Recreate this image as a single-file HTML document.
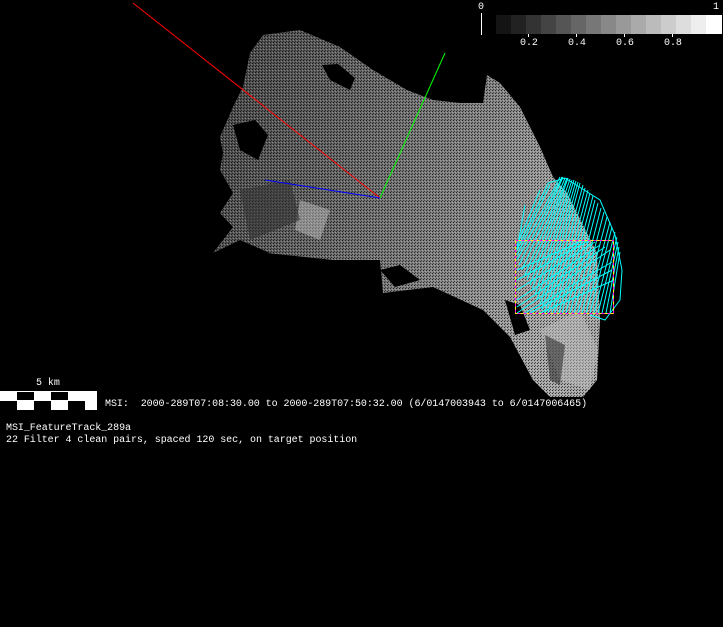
<!DOCTYPE html>
<html><head><style>
html,body{margin:0;padding:0;background:#000;width:723px;height:627px;overflow:hidden}
.t{position:absolute;color:#fff;font-family:"Liberation Mono",monospace;font-size:10px;letter-spacing:-0.05px;white-space:pre;line-height:12px}
</style></head><body>
<svg width="723" height="627" style="position:absolute;left:0;top:0">
<defs>
<linearGradient id="g" x1="0" y1="0" x2="1" y2="0.3">
<stop offset="0" stop-color="#444"/><stop offset="0.4" stop-color="#666"/><stop offset="0.75" stop-color="#888"/><stop offset="1" stop-color="#a8a8a8"/>
</linearGradient>
<pattern id="p" width="3" height="3" patternUnits="userSpaceOnUse"><rect x="0" y="0" width="1" height="1" fill="#000" opacity=".7"/><rect x="1" y="2" width="1" height="1" fill="#000" opacity=".5"/><rect x="2" y="1" width="1" height="1" fill="#ddd" opacity=".35"/></pattern>
</defs>
<g id="sh">
<polygon fill="url(#g)" points="263,35 300,30 340,47 373,70 407,90 433,100 460,103 483,103 487,75 500,83 520,107 540,147 553,177 567,193 597,253 600,320 597,380 583,397 550,397 533,380 510,337 483,310 433,287 383,293 380,260 333,260 267,253 213,253 233,227 220,213 233,193 220,170 223,153 220,137 233,107 243,87 250,53"/>
<polygon fill="url(#p)" points="263,35 300,30 340,47 373,70 407,90 433,100 460,103 483,103 487,75 500,83 520,107 540,147 553,177 567,193 597,253 600,320 597,380 583,397 550,397 533,380 510,337 483,310 433,287 383,293 380,260 333,260 267,253 213,253 233,227 220,213 233,193 220,170 223,153 220,137 233,107 243,87 250,53"/>
</g>
<g fill="#000">
<polygon points="233,125 255,120 268,135 258,160 240,150"/>
<polygon points="322,65 338,64 355,78 350,90 330,80"/>
<polygon points="380,270 400,265 420,280 395,287"/>
<polygon points="213,253 240,240 270,253"/>
<polygon points="505,300 520,305 530,330 515,335"/>
</g>
<g fill="#bbb" opacity=".5">
<polygon points="540,330 580,310 598,350 590,390 560,380"/>
<polygon points="300,200 330,210 320,240 295,230"/>
</g>
<g fill="#333" opacity=".6">
<polygon points="240,190 290,180 300,220 250,240"/>
<polygon points="545,335 565,345 560,385 550,380"/>
</g>
<g stroke="#0ff" stroke-width="1" fill="none">
<path d="M517,260 L560,177 M519,265 L562,177 M522,270 L563,177 M525,275 L565,178 M527,280 L567,178 M530,285 L568,178 M532,290 L570,179 M535,295 L572,180 M537,300 L574,180 M540,305 L576,181 M542,310 L578,182 M545,313 L580,183 M548,313 L583,185 M552,313 L585,188 M555,313 L588,190 M559,313 L590,193 M562,313 L593,196 M566,313 L595,200 M570,313 L598,203 M574,313 L601,208 M578,313 L604,212 M582,313 L607,217 M586,313 L610,222 M590,313 L612,227 M594,313 L615,232 M598,313 L617,237 M602,313 L618,242 M606,313 L619,247 M610,313 L620,252 M517,250 L525,205 M517,245 L540,190 M517,255 L550,185"/>
<path d="M517,250 L548,183 L565,178 L600,200 L615,235 L622,270 L620,300 L605,320 L590,315"/>
<path d="M517,270 L585,240 M517,280 L590,240 M517,290 L595,242 M517,300 L600,245 M517,307 L605,247 M517,313 L610,250 M525,313 L612,262 M530,313 L612,270 M540,313 L614,280"/>
</g>
<rect x="515.5" y="240.5" width="98" height="73" fill="none" stroke="#f0f" stroke-dasharray="3,3"/>
<rect x="515.5" y="240.5" width="98" height="73" fill="none" stroke="#ff0" stroke-dasharray="3,3" stroke-dashoffset="3"/>
<line x1="133" y1="3" x2="380" y2="198" stroke="#f00"/>
<line x1="380" y1="198" x2="445" y2="53" stroke="#0f0"/>
<line x1="265" y1="180" x2="380" y2="198" stroke="#00f"/>
<g>
<rect x="496" y="15" width="15" height="19" fill="#141414"/><rect x="511" y="15" width="15" height="19" fill="#222"/><rect x="526" y="15" width="15" height="19" fill="#333"/><rect x="541" y="15" width="15" height="19" fill="#444"/><rect x="556" y="15" width="15" height="19" fill="#555"/><rect x="571" y="15" width="15" height="19" fill="#666"/><rect x="586" y="15" width="15" height="19" fill="#777"/><rect x="601" y="15" width="15" height="19" fill="#888"/><rect x="616" y="15" width="15" height="19" fill="#999"/><rect x="631" y="15" width="15" height="19" fill="#aaa"/><rect x="646" y="15" width="15" height="19" fill="#bbb"/><rect x="661" y="15" width="15" height="19" fill="#ccc"/><rect x="676" y="15" width="15" height="19" fill="#ddd"/><rect x="691" y="15" width="15" height="19" fill="#eee"/><rect x="706" y="15" width="16" height="19" fill="#fff"/>
<line x1="481.5" y1="13" x2="481.5" y2="35" stroke="#fff"/>
<line x1="528.5" y1="34" x2="528.5" y2="37" stroke="#fff"/><line x1="576.5" y1="34" x2="576.5" y2="37" stroke="#fff"/><line x1="624.5" y1="34" x2="624.5" y2="37" stroke="#fff"/><line x1="672.5" y1="34" x2="672.5" y2="37" stroke="#fff"/>
</g>
<rect x="0" y="391" width="97" height="19" fill="#fff"/>
<g fill="#000">
<rect x="17" y="392" width="17" height="8"/><rect x="51" y="392" width="17" height="8"/>
<rect x="0" y="401" width="17" height="9"/><rect x="34" y="401" width="17" height="9"/><rect x="68" y="401" width="17" height="9"/>
</g>
</svg>
<div class="t" style="left:478px;top:2px">0</div>
<div class="t" style="left:713px;top:2px">1</div>
<div class="t" style="left:520px;top:38px">0.2</div>
<div class="t" style="left:568px;top:38px">0.4</div>
<div class="t" style="left:616px;top:38px">0.6</div>
<div class="t" style="left:664px;top:38px">0.8</div>
<div class="t" style="left:36px;top:378px">5 km</div>
<div class="t" style="left:105px;top:399px">MSI:  2000-289T07:08:30.00 to 2000-289T07:50:32.00 (6/0147003943 to 6/0147006465)</div>
<div class="t" style="left:6px;top:423px">MSI_FeatureTrack_289a</div>
<div class="t" style="left:6px;top:435px">22 Filter 4 clean pairs, spaced 120 sec, on target position</div>
</body></html>
